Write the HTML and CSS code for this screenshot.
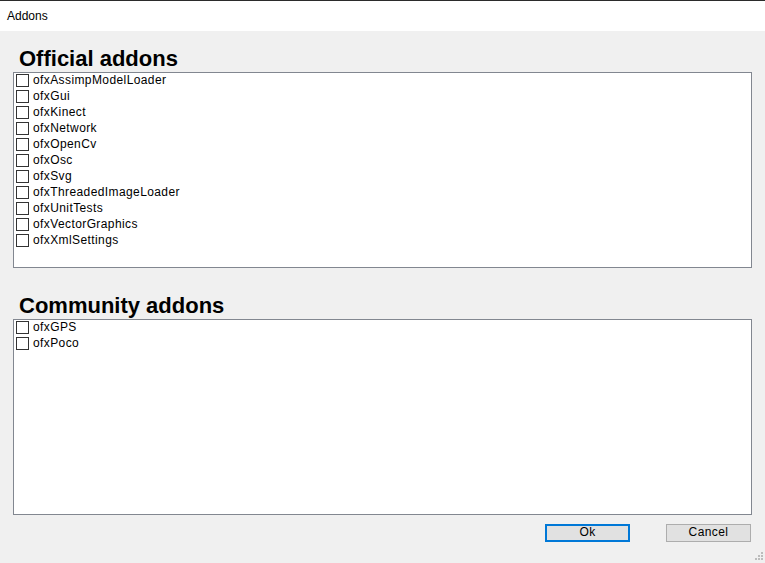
FILE: index.html
```html
<!DOCTYPE html>
<html>
<head>
<meta charset="utf-8">
<title>Addons</title>
<link rel="stylesheet" href="styles.css">
</head>
<body>
<div class="window">
  <div class="titlebar">Addons</div>
  <div class="content">
    <h2 class="heading">Official addons</h2>
    <div class="listbox">
      <label class="item"><span class="check"></span>ofxAssimpModelLoader</label>
      <label class="item"><span class="check"></span>ofxGui</label>
      <label class="item"><span class="check"></span>ofxKinect</label>
      <label class="item"><span class="check"></span>ofxNetwork</label>
      <label class="item"><span class="check"></span>ofxOpenCv</label>
      <label class="item"><span class="check"></span>ofxOsc</label>
      <label class="item"><span class="check"></span>ofxSvg</label>
      <label class="item"><span class="check"></span>ofxThreadedImageLoader</label>
      <label class="item"><span class="check"></span>ofxUnitTests</label>
      <label class="item"><span class="check"></span>ofxVectorGraphics</label>
      <label class="item"><span class="check"></span>ofxXmlSettings</label>
    </div>
    <h2 class="heading heading-second">Community addons</h2>
    <div class="listbox">
      <label class="item"><span class="check"></span>ofxGPS</label>
      <label class="item"><span class="check"></span>ofxPoco</label>
    </div>
    <div class="buttons">
      <button class="btn btn-default">Ok</button>
      <button class="btn">Cancel</button>
    </div>
    <svg class="grip" width="10" height="10" viewBox="0 0 10 10">
      <rect x="8" y="0" width="2" height="2" fill="#bcbcbc"/>
      <rect x="5" y="3" width="2" height="2" fill="#bcbcbc"/>
      <rect x="8" y="3" width="2" height="2" fill="#bcbcbc"/>
      <rect x="2" y="6" width="2" height="2" fill="#bcbcbc"/>
      <rect x="5" y="6" width="2" height="2" fill="#bcbcbc"/>
      <rect x="8" y="6" width="2" height="2" fill="#bcbcbc"/>
    </svg>
  </div>
</div>
</body>
</html>
```
FILE: styles.css
```css
html, body {
  margin: 0;
  padding: 0;
  width: 765px;
  height: 563px;
  overflow: hidden;
  font-family: "Liberation Sans", Arial, sans-serif;
}

.window {
  width: 765px;
  height: 563px;
  display: flex;
  flex-direction: column;
}

.titlebar {
  height: 30px;
  border-top: 1px solid #2b2b2b;
  background: #ffffff;
  color: #000;
  font-size: 12px;
  line-height: 30px;
  padding-left: 7px;
  box-sizing: content-box;
}

.content {
  position: relative;
  flex: 1;
  background: #f0f0f0;
  padding: 0 14px 0 13px;
  display: flex;
  flex-direction: column;
}

.heading {
  margin: 15px 0 1px 6px;
  font-size: 22px;
  line-height: 25px;
  font-weight: bold;
  color: #000;
}

.heading-second {
  margin-top: 25px;
}

.listbox {
  width: 737px;
  height: 194px;
  border: 1px solid #828790;
  background: #ffffff;
  box-sizing: content-box;
  display: flex;
  flex-direction: column;
}

.item {
  display: flex;
  align-items: flex-start;
  height: 16px;
  line-height: 14px;
  font-size: 12px;
  letter-spacing: 0.4px;
  color: #000;
  padding-left: 2px;
}

.check {
  width: 11px;
  height: 11px;
  margin-top: 1px;
  border: 1px solid #333333;
  background: #fff;
  margin-right: 4px;
  flex: none;
}

.buttons {
  display: flex;
  justify-content: flex-end;
  gap: 36px;
  margin-top: 9px;
}

.btn {
  width: 85px;
  height: 18px;
  box-sizing: border-box;
  background: #e1e1e1;
  border: 1px solid #adadad;
  font-family: "Liberation Sans", Arial, sans-serif;
  font-size: 12px;
  letter-spacing: 0.4px;
  color: #000;
  padding: 0 0 1px 0;
  line-height: 13px;
}

.btn-default {
  border: 2px solid #0078d7;
}

.grip {
  position: absolute;
  right: 2px;
  bottom: 1px;
}
```
